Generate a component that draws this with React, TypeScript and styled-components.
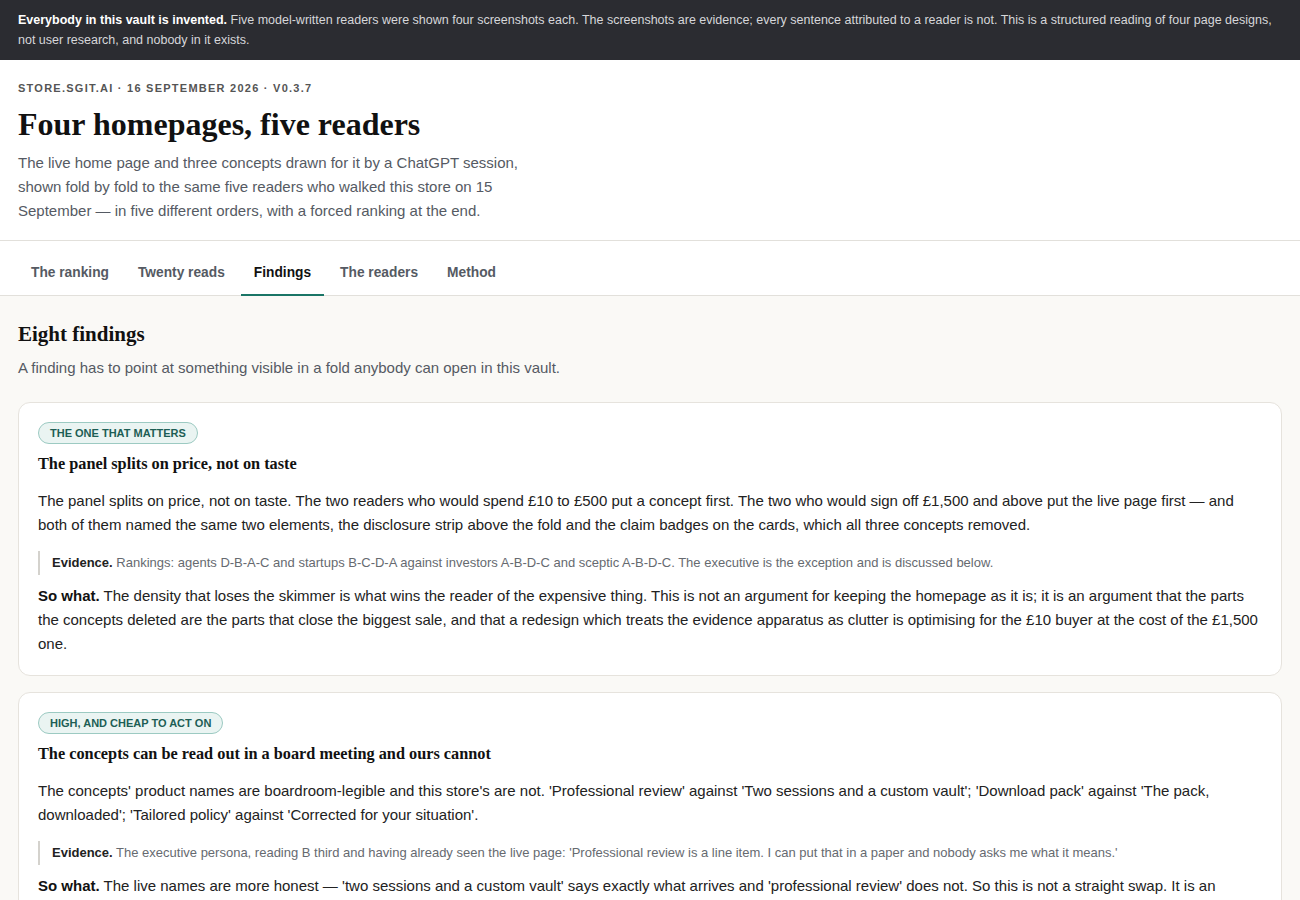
import styled, { createGlobalStyle } from 'styled-components';

const GlobalStyle = createGlobalStyle`
	* { box-sizing: border-box; }
	body {
		margin: 0;
		background: #faf9f6;
		font-family: 'Liberation Sans', Arial, sans-serif;
		color: #222;
	}
`;

const tabs = ['The ranking', 'Twenty reads', 'Findings', 'The readers', 'Method'];

const findings = [
	{
		id: 1,
		tag: 'The one that matters',
		title: 'The panel splits on price, not on taste',
		body: 'The panel splits on price, not on taste. The two readers who would spend £10 to £500 put a concept first. The two who would sign off £1,500 and above put the live page first — and both of them named the same two elements, the disclosure strip above the fold and the claim badges on the cards, which all three concepts removed.',
		evidence:
			'Rankings: agents D-B-A-C and startups B-C-D-A against investors A-B-D-C and sceptic A-B-D-C. The executive is the exception and is discussed below.',
		soWhat:
			'The density that loses the skimmer is what wins the reader of the expensive thing. This is not an argument for keeping the homepage as it is; it is an argument that the parts the concepts deleted are the parts that close the biggest sale, and that a redesign which treats the evidence apparatus as clutter is optimising for the £10 buyer at the cost of the £1,500 one.',
	},
	{
		id: 2,
		tag: 'High, and cheap to act on',
		title: 'The concepts can be read out in a board meeting and ours cannot',
		body: "The concepts' product names are boardroom-legible and this store's are not. 'Professional review' against 'Two sessions and a custom vault'; 'Download pack' against 'The pack, downloaded'; 'Tailored policy' against 'Corrected for your situation'.",
		evidence:
			"The executive persona, reading B third and having already seen the live page: 'Professional review is a line item. I can put that in a paper and nobody asks me what it means.'",
		soWhat:
			"The live names are more honest — 'two sessions and a custom vault' says exactly what arrives and 'professional review' does not. So this is not a straight swap. It is an argument for keeping the honest description and leading with the plain name a budget holder can write down.",
	},
];

const App = () => {
	return (
		<>
			<GlobalStyle />
			<Banner>
				<strong>Everybody in this vault is invented.</strong> Five model-written readers were shown four
				screenshots each. The screenshots are evidence; every sentence attributed to a reader is not. This is
				a structured reading of four page designs, not user research, and nobody in it exists.
			</Banner>
			<Header>
				<Eyebrow>store.sgit.ai · 16 September 2026 · v0.3.7</Eyebrow>
				<Title>Four homepages, five readers</Title>
				<Lede>
					The live home page and three concepts drawn for it by a ChatGPT session, shown fold by fold to the
					same five readers who walked this store on 15 September — in five different orders, with a forced
					ranking at the end.
				</Lede>
			</Header>
			<Tabs>
				{tabs.map((tab) => (
					<Tab key={tab} active={tab === 'Findings'}>
						{tab}
					</Tab>
				))}
			</Tabs>
			<Main>
				<SectionTitle>Eight findings</SectionTitle>
				<SectionNote>A finding has to point at something visible in a fold anybody can open in this vault.</SectionNote>
				<List>
					{findings.map((f) => (
						<Card key={f.id}>
							<Badge>{f.tag}</Badge>
							<CardTitle>{f.title}</CardTitle>
							<Para>{f.body}</Para>
							<Evidence>
								<b>Evidence.</b> {f.evidence}
							</Evidence>
							<Para>
								<b>So what.</b> {f.soWhat}
							</Para>
						</Card>
					))}
				</List>
			</Main>
		</>
	);
};

export default App;

const Banner = styled.div`
	background: #2b2c31;
	color: #d6d7da;
	font-size: 12.5px;
	line-height: 20px;
	padding: 10px 18px;
	strong {
		color: #fff;
	}
`;

const Header = styled.header`
	background: #fff;
	padding: 21px 18px 17px;
	border-bottom: 1px solid #e2e0db;
`;

const Eyebrow = styled.div`
	font-size: 11px;
	font-weight: 700;
	letter-spacing: 1.25px;
	text-transform: uppercase;
	color: #555;
	line-height: 14px;
`;

const Title = styled.h1`
	margin: 9px 0 7px;
	font-family: 'Liberation Serif', 'Times New Roman', serif;
	font-size: 32px;
	line-height: 40px;
	font-weight: 700;
	color: #111;
`;

const Lede = styled.p`
	margin: 0;
	max-width: 520px;
	font-size: 15px;
	line-height: 24px;
	color: #555a63;
`;

const Tabs = styled.nav`
	display: flex;
	gap: 3px;
	padding: 0 18px;
	background: #fff;
	border-bottom: 1px solid #e2e0db;
	height: 55px;
`;

const Tab = styled.div<{ active: boolean }>`
	display: flex;
	align-items: center;
	padding: 10px 13px 0;
	font-size: 13.75px;
	font-weight: 700;
	color: ${(p) => (p.active ? '#111' : '#555a63')};
	border-bottom: 2px solid ${(p) => (p.active ? '#1a7566' : 'transparent')};
	margin-bottom: -1px;
`;

const Main = styled.main`
	padding: 23px 18px 40px;
`;

const SectionTitle = styled.h2`
	margin: 0;
	font-family: 'Liberation Serif', 'Times New Roman', serif;
	font-size: 21px;
	line-height: 30px;
	font-weight: 700;
	color: #111;
`;

const SectionNote = styled.p`
	margin: 8px 0 0;
	font-size: 15px;
	line-height: 22px;
	color: #555a63;
`;

const List = styled.div`
	display: flex;
	flex-direction: column;
	gap: 16px;
	margin-top: 23px;
`;

const Card = styled.article`
	background: #fff;
	border: 1px solid #e6e3dd;
	border-radius: 12px;
	padding: 19px 19px 19px;
`;

const Badge = styled.span`
	display: inline-block;
	font-size: 11px;
	font-weight: 700;
	letter-spacing: 0;
	text-transform: uppercase;
	color: #1d5e55;
	background: #eaf4f2;
	border: 1px solid #9ccac2;
	border-radius: 999px;
	padding: 3px 11px;
	line-height: 14px;
`;

const CardTitle = styled.h3`
	margin: 8px 0 13px;
	font-family: 'Liberation Serif', 'Times New Roman', serif;
	font-size: 16.3px;
	line-height: 24px;
	font-weight: 700;
	color: #111;
`;

const Para = styled.p`
	margin: 0;
	font-size: 15px;
	line-height: 24px;
	color: #222;
	b {
		color: #111;
	}
`;

const Evidence = styled.p`
	margin: 14px 0 9px;
	border-left: 2px solid #d4d2cd;
	padding: 2px 0 2px 12px;
	font-size: 13px;
	line-height: 20px;
	color: #666a70;
	b {
		color: #222;
	}
`;
